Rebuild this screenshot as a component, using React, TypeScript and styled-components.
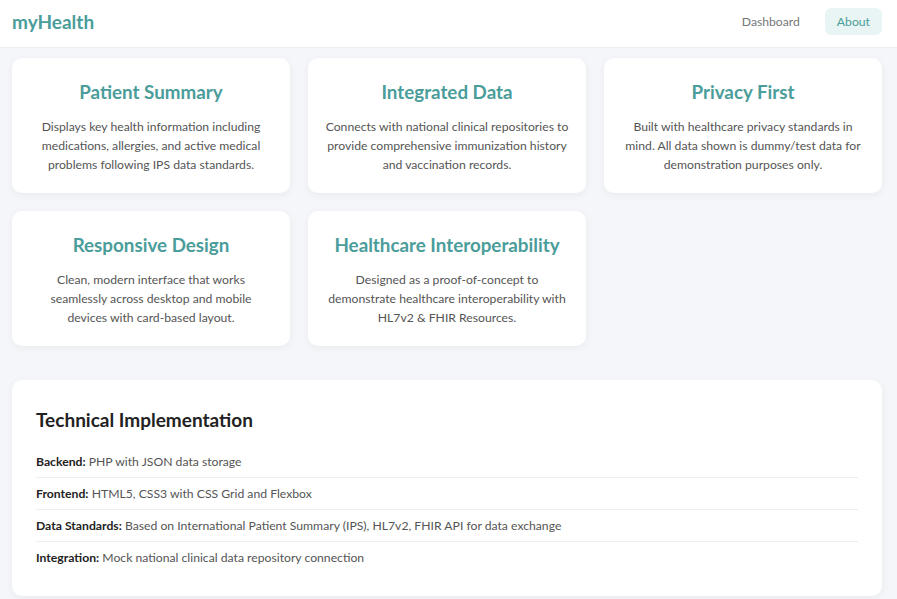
import styled, { createGlobalStyle } from "styled-components";

const TEAL = "#4a9d9a";

const features = [
  {
    title: "Patient Summary",
    text: "Displays key health information including medications, allergies, and active medical problems following IPS data standards.",
  },
  {
    title: "Integrated Data",
    text: "Connects with national clinical repositories to provide comprehensive immunization history and vaccination records.",
  },
  {
    title: "Privacy First",
    text: "Built with healthcare privacy standards in mind. All data shown is dummy/test data for demonstration purposes only.",
  },
  {
    title: "Responsive Design",
    text: "Clean, modern interface that works seamlessly across desktop and mobile devices with card-based layout.",
  },
  {
    title: "Healthcare Interoperability",
    text: "Designed as a proof-of-concept to demonstrate healthcare interoperability with HL7v2 & FHIR Resources.",
  },
];

const techRows = [
  { label: "Backend:", value: "PHP with JSON data storage" },
  { label: "Frontend:", value: "HTML5, CSS3 with CSS Grid and Flexbox" },
  {
    label: "Data Standards:",
    value: "Based on International Patient Summary (IPS), HL7v2, FHIR API for data exchange",
  },
  { label: "Integration:", value: "Mock national clinical data repository connection" },
];

const App = () => {
  return (
    <>
      <GlobalStyle />
      <Header>
        <Brand>myHealth</Brand>
        <Nav>
          <NavLink>Dashboard</NavLink>
          <NavLink $active>About</NavLink>
        </Nav>
      </Header>
      <Main>
        <FeatureGrid>
          {features.map((f) => (
            <FeatureCard key={f.title}>
              <FeatureTitle>{f.title}</FeatureTitle>
              <FeatureText>{f.text}</FeatureText>
            </FeatureCard>
          ))}
        </FeatureGrid>
        <TechCard>
          <TechTitle>Technical Implementation</TechTitle>
          <TechList>
            {techRows.map((r) => (
              <TechRow key={r.label}>
                <strong>{r.label}</strong> {r.value}
              </TechRow>
            ))}
          </TechList>
        </TechCard>
      </Main>
    </>
  );
};

export default App;

const GlobalStyle = createGlobalStyle`
  * { box-sizing: border-box; }
  body {
    margin: 0;
    background: #f5f6fa;
    font-family: Lato, "Open Sans", sans-serif;
    color: #444;
  }
`;

const Header = styled.header`
  height: 48px;
  display: flex;
  align-items: center;
  justify-content: space-between;
  padding: 0 15px 4px 12px;
  background: #fff;
  border-bottom: 1px solid #eceef3;
`;

const Brand = styled.div`
  font-size: 19px;
  font-weight: 700;
  color: ${TEAL};
`;

const Nav = styled.nav`
  display: flex;
  align-items: center;
  gap: 13px;
`;

const NavLink = styled.a<{ $active?: boolean }>`
  font-size: 12.2px;
  line-height: 17px;
  padding: 5px 12px;
  border-radius: 6px;
  color: ${(p) => (p.$active ? TEAL : "#777")};
  background: ${(p) => (p.$active ? "#e9f4f4" : "transparent")};
  cursor: pointer;
`;

const Main = styled.main`
  padding: 10px 15px 10px 12px;
`;

const FeatureGrid = styled.div`
  display: grid;
  grid-template-columns: repeat(3, 1fr);
  gap: 18px;
`;

const FeatureCard = styled.div`
  background: #fff;
  border-radius: 10px;
  box-shadow: 0 2px 8px rgba(0, 0, 0, 0.05);
  padding: 23px 17.5px 19px;
  text-align: center;
`;

const FeatureTitle = styled.h3`
  margin: 0 0 14px;
  font-size: 18.8px;
  line-height: 22px;
  font-weight: 700;
  color: ${TEAL};
`;

const FeatureText = styled.p`
  margin: 0;
  font-size: 12.2px;
  line-height: 19px;
  color: #555;
`;

const TechCard = styled.section`
  margin-top: 34px;
  background: #fff;
  border-radius: 10px;
  box-shadow: 0 2px 8px rgba(0, 0, 0, 0.05);
  padding: 28px 24px 23px;
`;

const TechTitle = styled.h2`
  margin: 0 0 14px;
  font-size: 19px;
  line-height: 24px;
  font-weight: 700;
  color: #222;
`;

const TechList = styled.div`
  display: flex;
  flex-direction: column;
`;

const TechRow = styled.div`
  font-size: 12.2px;
  line-height: 17px;
  padding: 7px 0 7px;
  color: #555;
  border-bottom: 1px solid #eceef2;

  &:last-child {
    border-bottom: none;
  }

  & strong {
    color: #222;
    font-weight: 700;
  }
`;
